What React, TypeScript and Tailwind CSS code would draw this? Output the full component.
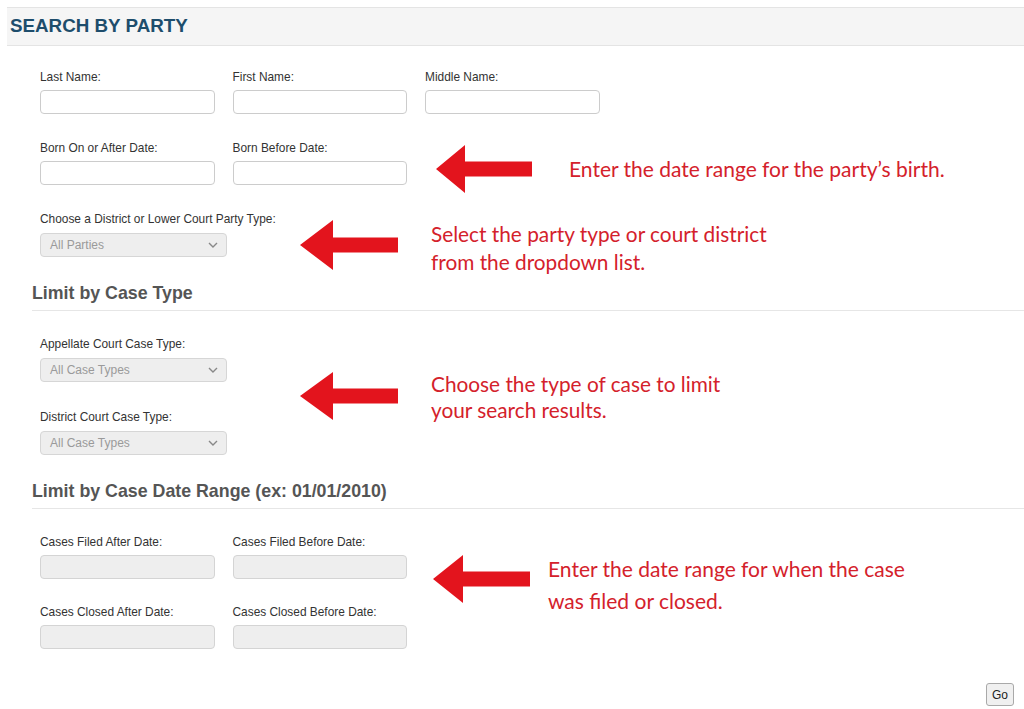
import React from "react";

const Arrow = ({ w, h, head, shaft }: { w: number; h: number; head: number; shaft: number }) => {
  const cy = h / 2;
  return (
    <svg width={w} height={h} viewBox={`0 0 ${w} ${h}`}>
      <polygon
        points={`0,${cy} ${head},0 ${head},${cy - shaft / 2} ${w},${cy - shaft / 2} ${w},${cy + shaft / 2} ${head},${cy + shaft / 2} ${head},${h}`}
        fill="#e3141d"
      />
    </svg>
  );
};

const Chevron = () => (
  <svg width="10" height="6" viewBox="0 0 10 6" className="shrink-0">
    <path d="M1 1 L5 5 L9 1" stroke="#888" strokeWidth="1.4" fill="none" />
  </svg>
);

const Label = ({ children }: { children: React.ReactNode }) => (
  <div className="text-[11.9px] leading-[14px] text-[#333]">{children}</div>
);

const TextInput = ({ disabled }: { disabled?: boolean }) => (
  <div
    className={`mt-[6px] h-[24px] w-[174.5px] rounded-[4px] border ${
      disabled ? "border-[#d4d4d4] bg-[#eeeeee]" : "border-[#cccccc] bg-white"
    }`}
  />
);

const Select = ({ text }: { text: string }) => (
  <div className="mt-[7px] flex h-[24px] w-[187px] items-center justify-between rounded-[4px] border border-[#d6d6d6] bg-[#eeeeee] pl-[9px] pr-[8px]">
    <span className="text-[12px] text-[#9a9a9a]">{text}</span>
    <Chevron />
  </div>
);

const Field = ({ label, children }: { label: string; children: React.ReactNode }) => (
  <div className="flex flex-col">
    <Label>{label}</Label>
    {children}
  </div>
);

const SectionHeading = ({ children }: { children: React.ReactNode }) => (
  <div className="ml-[32px] border-b border-[#e6e6e6] pb-[7px] text-[17.8px] font-bold leading-[20px] text-[#555]">
    {children}
  </div>
);

const Note = ({ children, className }: { children: React.ReactNode; className: string }) => (
  <div
    className={`absolute whitespace-nowrap text-[#d4212b] ${className}`}
    style={{ fontFamily: "Lato, 'Open Sans', sans-serif" }}
  >
    {children}
  </div>
);

export default function App() {
  return (
    <div
      className="relative h-[709px] w-[1024px] overflow-hidden bg-white pt-[7px]"
      style={{ fontFamily: "'Liberation Sans', Arial, sans-serif" }}
    >
      <div className="ml-[7px] flex h-[39px] items-center border-y border-[#e4e4e4] bg-[#f5f5f5] pl-[3px]">
        <span className="text-[18.8px] font-bold text-[#1d4d6c]">SEARCH BY PARTY</span>
      </div>

      <div className="ml-[40px] mt-[24px] flex gap-[18px]">
        <Field label="Last Name:"><TextInput /></Field>
        <Field label="First Name:"><TextInput /></Field>
        <Field label="Middle Name:"><TextInput /></Field>
      </div>

      <div className="ml-[40px] mt-[27px] flex gap-[18px]">
        <Field label="Born On or After Date:"><TextInput /></Field>
        <Field label="Born Before Date:"><TextInput /></Field>
      </div>

      <div className="ml-[40px] mt-[27px]">
        <Field label="Choose a District or Lower Court Party Type:"><Select text="All Parties" /></Field>
      </div>

      <div className="mt-[26px]">
        <SectionHeading>Limit by Case Type</SectionHeading>
      </div>

      <div className="ml-[40px] mt-[26px]">
        <Field label="Appellate Court Case Type:"><Select text="All Case Types" /></Field>
      </div>
      <div className="ml-[40px] mt-[28px]">
        <Field label="District Court Case Type:"><Select text="All Case Types" /></Field>
      </div>

      <div className="mt-[26px]">
        <SectionHeading>Limit by Case Date Range (ex: 01/01/2010)</SectionHeading>
      </div>

      <div className="ml-[40px] mt-[26px] flex gap-[18px]">
        <Field label="Cases Filed After Date:"><TextInput disabled /></Field>
        <Field label="Cases Filed Before Date:"><TextInput disabled /></Field>
      </div>
      <div className="ml-[40px] mt-[26px] flex gap-[18px]">
        <Field label="Cases Closed After Date:"><TextInput disabled /></Field>
        <Field label="Cases Closed Before Date:"><TextInput disabled /></Field>
      </div>

      <div className="mr-[10px] mt-[34px] flex justify-end">
        <button className="h-[23px] w-[28px] rounded-[3px] border border-[#a9a9a9] bg-[#f0f0f0] text-[12px] text-[#222]">
          Go
        </button>
      </div>

      {/* annotations */}
      <div className="absolute left-[436px] top-[145px]"><Arrow w={96} h={48} head={29} shaft={15} /></div>
      <Note className="left-[569px] top-[156px] text-[21px] leading-[26px]">Enter the date range for the party’s birth.</Note>

      <div className="absolute left-[300px] top-[220px]"><Arrow w={98} h={50} head={33} shaft={15} /></div>
      <Note className="left-[431px] top-[220px] text-[20.8px] leading-[28px]">
        Select the party type or court district
        <br />
        from the dropdown list.
      </Note>

      <div className="absolute left-[300px] top-[372px]"><Arrow w={98} h={48} head={33} shaft={15} /></div>
      <Note className="left-[431px] top-[371px] text-[20.8px] leading-[26px]">
        Choose the type of case to limit
        <br />
        your search results.
      </Note>

      <div className="absolute left-[433px] top-[555px]"><Arrow w={97} h={48} head={30} shaft={15} /></div>
      <Note className="left-[548px] top-[553px] text-[21px] leading-[32px]">
        Enter the date range for when the case
        <br />
        was filed or closed.
      </Note>
    </div>
  );
}
